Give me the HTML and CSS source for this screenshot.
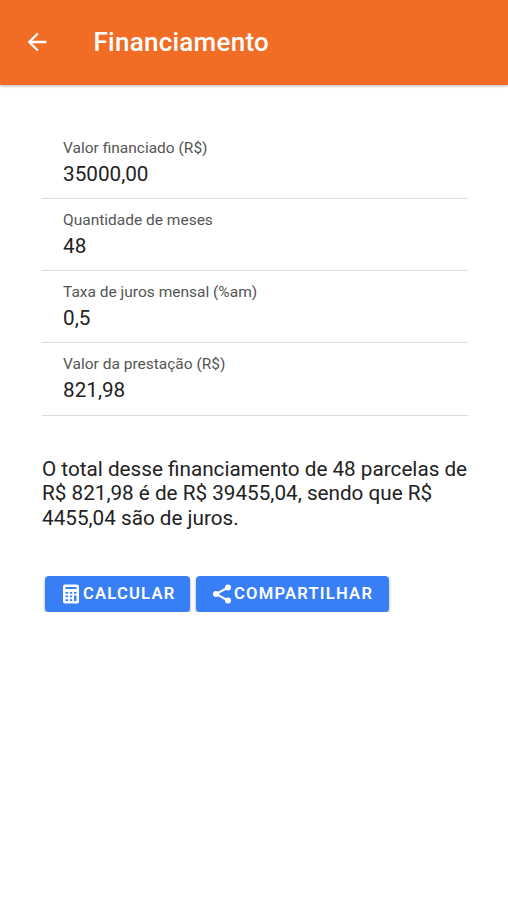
FILE: index.html
```html
<!DOCTYPE html>
<html lang="pt-BR">
<head>
<meta charset="utf-8">
<title>Financiamento</title>
<link rel="stylesheet" href="styles.css">
</head>
<body>
<header class="toolbar">
  <svg class="back" viewBox="0 0 24 24"><path d="M20 11H7.830l5.590-5.590L12 4l-8 8 8 8 1.410-1.410L7.830 13H20v-2z"/></svg>
  <h1 class="title">Financiamento</h1>
</header>
<main class="content">
  <div class="item"><span class="label">Valor financiado (R$)</span><span class="value">35000,00</span></div>
  <div class="item"><span class="label">Quantidade de meses</span><span class="value">48</span></div>
  <div class="item"><span class="label">Taxa de juros mensal (%am)</span><span class="value">0,5</span></div>
  <div class="item"><span class="label">Valor da prestação (R$)</span><span class="value">821,98</span></div>
  <p class="summary"><span>O total desse financiamento de 48 parcelas de</span><br><span>R$ 821,98 é de R$ 39455,04, sendo que R$</span><br><span>4455,04 são de juros.</span></p>
  <div class="actions">
    <button class="button calc"><svg class="icon" viewBox="0 0 20 20"><path fill-rule="evenodd" d="M4 .5h12q2 0 2 2v15q0 2-2 2H4q-2 0-2-2v-15q0-2 2-2zM4.500 3v2h11V3zM4.500 8v1.700h2.500V8zM8.800 8v1.700h2.400V8zM13 8v1.700h2.500V8zM4.500 11.500v1.700h2.500v-1.700zM8.800 11.500v1.700h2.400v-1.700zM13 11.500v5.500h2.500v-5.500zM4.500 15.200v1.700h2.500v-1.700zM8.800 15.200v1.700h2.400v-1.700z"/></svg><span>CALCULAR</span></button>
    <button class="button share"><svg class="icon" viewBox="0 0 20 20"><path d="M16 3.500L4 10l12 6.500" fill="none" stroke="currentColor" stroke-width="2"/><circle cx="16" cy="3.500" r="3"/><circle cx="4" cy="10" r="3"/><circle cx="16" cy="16.500" r="3"/></svg><span>COMPARTILHAR</span></button>
  </div>
</main>
</body>
</html>
```
FILE: styles.css
```css
* { box-sizing: border-box; }
body { margin: 0; background: #fff; color: #222; font-family: Roboto, sans-serif; }
.toolbar { height: 85px; background: #f16d25; color: #fff; display: flex; align-items: center; padding: 0 0 1px 23px; box-shadow: 0 1px 3px rgba(0,0,0,.3); }
.back { width: 28px; height: 28px; fill: currentColor; }
.title { margin: 0 0 1px 42.500px; font-size: 26px; line-height: 32px; font-weight: 500; letter-spacing: .25px; }
.content { padding: 41.500px 40px 0 42px; }
.item { height: 72.250px; border-bottom: 1px solid #dcdcdc; padding: 12px 0 0 21px; display: flex; flex-direction: column; }
.label { font-size: 15.500px; line-height: 18px; color: #555; white-space: nowrap; align-self: flex-start; }
.value { font-size: 20.700px; line-height: 24px; margin-top: 5px; align-self: flex-start; }
.summary { margin: 41px 0 0; font-size: 20.700px; line-height: 24.500px; white-space: nowrap; }
.actions { display: flex; gap: 6px; margin: 46px 0 0 3px; }
.button { display: flex; align-items: center; height: 36px; border: 0; border-radius: 4px; padding: 0 0 0 16px; background: #387ef5; color: #fff; font: 600 16.600px/20px Roboto, sans-serif; letter-spacing: 1.200px; white-space: nowrap; box-shadow: 0 2px 3px rgba(0,0,0,.35); }
.calc { width: 145px; }
.share { width: 193px; }
.icon { width: 20px; height: 20px; margin-right: 2px; fill: currentColor; flex: none; }
```
